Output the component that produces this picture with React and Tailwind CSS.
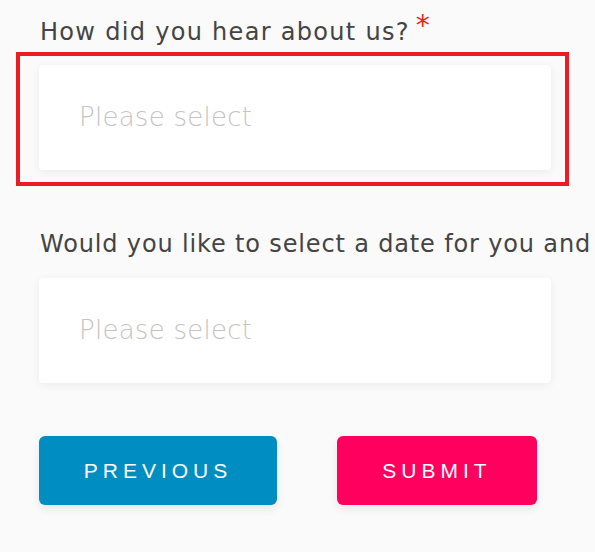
export default function App() {
  const font = { fontFamily: '"DejaVu Sans", "Open Sans", sans-serif' };
  return (
    <div className="w-[595px] h-[552px] overflow-hidden bg-[#fafafa] pl-[39px]" style={font}>
      <div className="pt-[14px]">
        <div className="pl-px text-[24px] leading-[36px] tracking-[1.3px] text-[#444444] whitespace-nowrap">
          How did you hear about us?
          <span className="ml-[6px] text-[28px] text-[#ff1a1a] align-top relative -top-[6px]">*</span>
        </div>

        <div className="relative mt-[15px] w-[512px]">
          <div className="h-[105px] rounded bg-white shadow-[0_2px_8px_rgba(0,0,0,0.06)] flex items-center pl-[40px] text-[26px] tracking-[0.25px] font-extralight text-[#c6c3c3]">
            Please select
          </div>
          <div className="absolute -left-[23px] -top-[13px] -right-[18px] -bottom-[16px] border-4 border-[#ed1c24]" />
        </div>
      </div>

      <div className="mt-[56px] pl-px text-[24px] leading-[36px] tracking-[0.85px] text-[#444444] whitespace-nowrap">
        Would you like to select a date for you and your guest?
      </div>

      <div className="mt-[16px] w-[512px] h-[105px] rounded bg-white shadow-[0_2px_8px_rgba(0,0,0,0.06)] flex items-center pl-[40px] text-[26px] tracking-[0.25px] font-extralight text-[#c6c3c3]">
        Please select
      </div>

      <div className="mt-[53px] flex gap-[60px]" style={{ fontFamily: '"Liberation Sans", Arial, sans-serif' }}>
        <button className="w-[238px] h-[69px] rounded-md bg-[#008ec2] text-white text-[21px] tracking-[5px] shadow-[0_4px_10px_rgba(0,0,0,0.08)]">
          PREVIOUS
        </button>
        <button className="w-[200px] h-[69px] rounded-md bg-[#ff005e] text-white text-[21px] tracking-[5px] shadow-[0_4px_10px_rgba(0,0,0,0.08)]">
          SUBMIT
        </button>
      </div>
    </div>
  );
}
